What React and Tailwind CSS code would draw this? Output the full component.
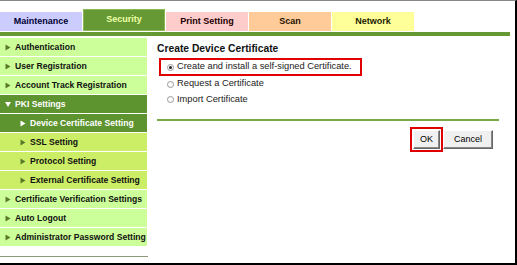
import React from 'react';

const tabs = [
  { id: 'maintenance', label: 'Maintenance', cls: 'bg-[#ccccff] text-[#000033]' },
  { id: 'security', label: 'Security', cls: 'bg-[#669933] text-[#eeffaa]', active: true },
  { id: 'print', label: 'Print Setting', cls: 'bg-[#ffcccc] text-[#220000]' },
  { id: 'scan', label: 'Scan', cls: 'bg-[#ffcc99] text-[#221100]' },
  { id: 'network', label: 'Network', cls: 'bg-[#ffff99] text-[#222200]' },
];

const menu = [
  { label: 'Authentication', level: 0 },
  { label: 'User Registration', level: 0 },
  { label: 'Account Track Registration', level: 0 },
  { label: 'PKI Settings', level: 0, open: true, dark: true },
  { label: 'Device Certificate Setting', level: 1, dark: true },
  { label: 'SSL Setting', level: 1 },
  { label: 'Protocol Setting', level: 1 },
  { label: 'External Certificate Setting', level: 1 },
  { label: 'Certificate Verification Settings', level: 0 },
  { label: 'Auto Logout', level: 0 },
  { label: 'Administrator Password Setting', level: 0 },
];

const Arrow = ({ down, color }) => (
  <svg width="6" height="7" viewBox="0 0 6 7" className="shrink-0">
    {down ? (
      <path d="M0 1 L6 1 L3 6 Z" fill={color} />
    ) : (
      <path d="M0.5 0.5 L5.5 3.5 L0.5 6.5 Z" fill={color} />
    )}
  </svg>
);

const Radio = ({ checked }) => (
  <span className="w-[7px] h-[7px] rounded-full border border-[#999] bg-white flex items-center justify-center shrink-0">
    {checked && <span className="w-[3px] h-[3px] rounded-full bg-[#222]" />}
  </span>
);

const App = () => {
  return (
    <div
      className="w-[517px] h-[265px] bg-white border-t border-t-[#888] border-r-2 border-r-black border-b-2 border-b-black flex flex-col overflow-hidden"
      style={{ fontFamily: '"Liberation Sans", Arial, sans-serif' }}
    >
      <div className="flex items-end pt-[7px] h-[30px]">
        {tabs.map(t => (
          <div
            key={t.id}
            className={`w-[82px] mr-[1px] flex items-center justify-center text-[9px] font-bold ${t.cls} ${t.active ? 'h-[22px] border border-[#88bb55]' : 'h-[19px]'}`}
          >
            {t.label}
          </div>
        ))}
      </div>
      <div className="h-[4px] w-[510px] bg-[#669933] mt-[1px]" />
      <div className="flex flex-1 mt-[2px]">
        <div className="w-[147px] flex flex-col">
          {menu.map(m => (
            <div
              key={m.label}
              className={`h-[19px] border-b border-white flex items-center gap-[4px] text-[8.6px] font-bold whitespace-nowrap overflow-hidden ${m.level ? 'pl-[20px]' : 'pl-[5px]'} ${m.dark ? 'bg-[#5e9430] text-white' : m.level ? 'bg-[#ccee66] text-[#111]' : 'bg-[#ccff99] text-[#111]'}`}
            >
              <Arrow down={m.open} color={m.dark ? '#ffffff' : '#5a7a2a'} />
              <span>{m.label}</span>
            </div>
          ))}
          <div className="mt-[9px] h-[1px] w-[148px] bg-[#8a9a7a]" />
        </div>
        <div className="flex-1 pl-[10px] pt-[3px] pr-[16px]">
          <div className="text-[10.3px] font-bold text-[#111] h-[15px] leading-[15px]">Create Device Certificate</div>
          <div className="flex flex-col text-[9.3px] text-[#222]">
            <div className="w-[203px] h-[18px] border-2 border-[#e00000] flex items-center gap-[3px] pl-[6px] ml-[2px] mt-[2px]">
              <Radio checked />
              <span className="whitespace-nowrap">Create and install a self-signed Certificate.</span>
            </div>
            <div className="h-[16px] flex items-center gap-[3px] pl-[10px]">
              <Radio />
              <span>Request a Certificate</span>
            </div>
            <div className="h-[15px] flex items-center gap-[3px] pl-[10px]">
              <Radio />
              <span>Import Certificate</span>
            </div>
          </div>
          <div className="mt-[12px] h-[2px] bg-[#77aa44]" />
          <div className="flex justify-end mt-[6px] pr-[6px] text-[9px] text-black">
            <div className="border-2 border-[#e00000] p-[1px]">
              <div className="w-[27px] h-[19px] bg-[#f0f0f0] border border-[#666] border-t-white border-l-white shadow-[inset_-1px_-1px_0_#888] flex items-center justify-center">OK</div>
            </div>
            <div className="mt-[3px] w-[50px] h-[19px] bg-[#f0f0f0] border border-[#666] border-t-white border-l-white shadow-[inset_-1px_-1px_0_#888] flex items-center justify-center">Cancel</div>
          </div>
        </div>
      </div>
    </div>
  );
};

export default App;
